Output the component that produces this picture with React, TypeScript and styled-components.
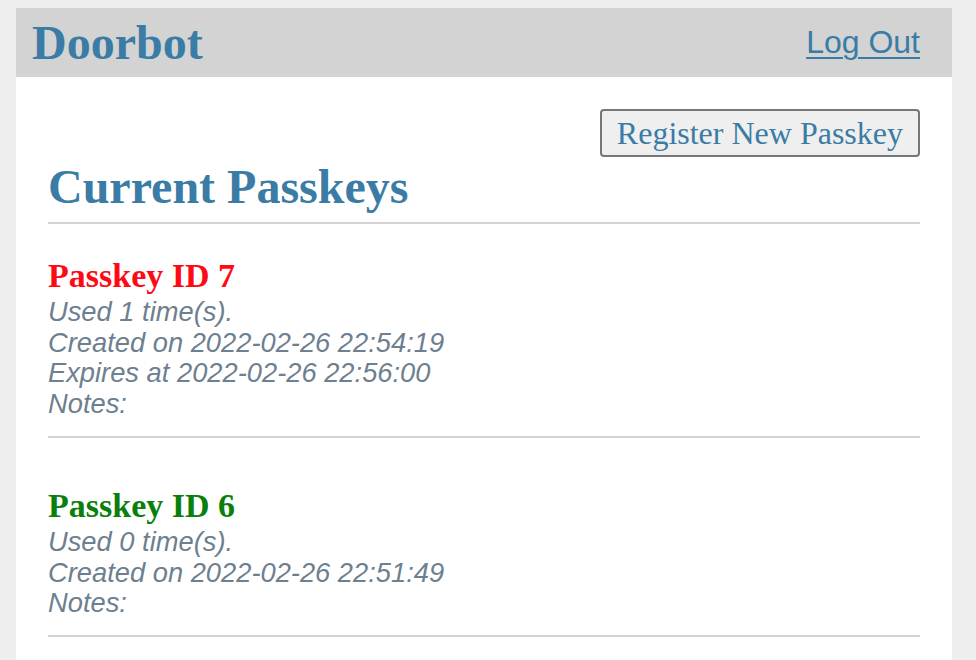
import React from "react";
import styled, { createGlobalStyle } from "styled-components";

const GlobalStyle = createGlobalStyle`
  html, body {
    margin: 0;
    padding: 0;
    background: #eeeeee;
  }
  body {
    font-family: "Liberation Serif", "Times New Roman", serif;
  }
`;

const Page = styled.div`
  padding: 8px 24px 0 16px;
  min-height: 652px;
`;

const Container = styled.div`
  background: #ffffff;
  min-height: 652px;
`;

const Header = styled.header`
  display: flex;
  align-items: center;
  justify-content: space-between;
  height: 69px;
  padding: 0 32px 0 16px;
  background: #d3d3d3;
`;

const Brand = styled.h1`
  margin: 0;
  font-family: "Liberation Serif", "Times New Roman", serif;
  font-weight: bold;
  font-size: 48px;
  line-height: 69px;
  color: #3a7ca5;
`;

const LogOut = styled.a`
  font-family: "Liberation Sans", Arial, sans-serif;
  font-size: 32px;
  line-height: 69px;
  color: #3a7ca5;
  text-decoration: underline;
  text-decoration-thickness: 2px;
  text-underline-offset: 4px;
  cursor: pointer;
`;

const Main = styled.main`
  padding: 32px 32px 0 32px;
`;

const Actions = styled.div`
  display: flex;
  justify-content: flex-end;
`;

const Button = styled.button`
  font-family: "Liberation Serif", "Times New Roman", serif;
  font-size: 32px;
  line-height: 36px;
  padding: 4px 15px;
  color: #3a7ca5;
  background: #efefef;
  border: 2px solid #767676;
  border-radius: 4px;
  cursor: pointer;
`;

const SectionTitle = styled.h2`
  margin: 2px 0 8px 0;
  font-family: "Liberation Serif", "Times New Roman", serif;
  font-weight: bold;
  font-size: 48px;
  line-height: 55px;
  color: #3a7ca5;
`;

const Divider = styled.hr<{ $after: number }>`
  margin: 0 0 ${(p) => p.$after}px 0;
  height: 2px;
  border: none;
  background: #d3d3d3;
`;

const PasskeyItem = styled.section`
  display: flex;
  flex-direction: column;
`;

const PasskeyTitle = styled.h3<{ $active: boolean }>`
  margin: 0;
  font-family: "Liberation Serif", "Times New Roman", serif;
  font-weight: bold;
  font-size: 34px;
  line-height: 39px;
  color: ${(p) => (p.$active ? "#0b7f0b" : "#ff0a14")};
`;

const Details = styled.div`
  padding-top: 2px;
  margin-bottom: 16px;
  font-family: "Liberation Sans", Arial, sans-serif;
  font-style: italic;
  font-size: 27.3px;
  line-height: 30.7px;
  color: #6e7f90;
`;

const DetailLine = styled.div``;

type Passkey = {
  id: number;
  used: number;
  created: string;
  expires?: string;
  notes: string;
  active: boolean;
};

const passkeys: Passkey[] = [
  {
    id: 7,
    used: 1,
    created: "2022-02-26 22:54:19",
    expires: "2022-02-26 22:56:00",
    notes: "",
    active: false,
  },
  {
    id: 6,
    used: 0,
    created: "2022-02-26 22:51:49",
    notes: "",
    active: true,
  },
];

export default function App() {
  return (
    <>
      <GlobalStyle />
      <Page>
        <Container>
          <Header>
            <Brand>Doorbot</Brand>
            <LogOut>Log Out</LogOut>
          </Header>
          <Main>
            <Actions>
              <Button>Register New Passkey</Button>
            </Actions>
            <SectionTitle>Current Passkeys</SectionTitle>
            <Divider $after={32} />
            {passkeys.map((p) => (
              <PasskeyItem key={p.id}>
                <PasskeyTitle $active={p.active}>Passkey ID {p.id}</PasskeyTitle>
                <Details>
                  <DetailLine>Used {p.used} time(s).</DetailLine>
                  <DetailLine>Created on {p.created}</DetailLine>
                  {p.expires && <DetailLine>Expires at {p.expires}</DetailLine>}
                  <DetailLine>Notes: {p.notes}</DetailLine>
                </Details>
                <Divider $after={48} />
              </PasskeyItem>
            ))}
          </Main>
        </Container>
      </Page>
    </>
  );
}
